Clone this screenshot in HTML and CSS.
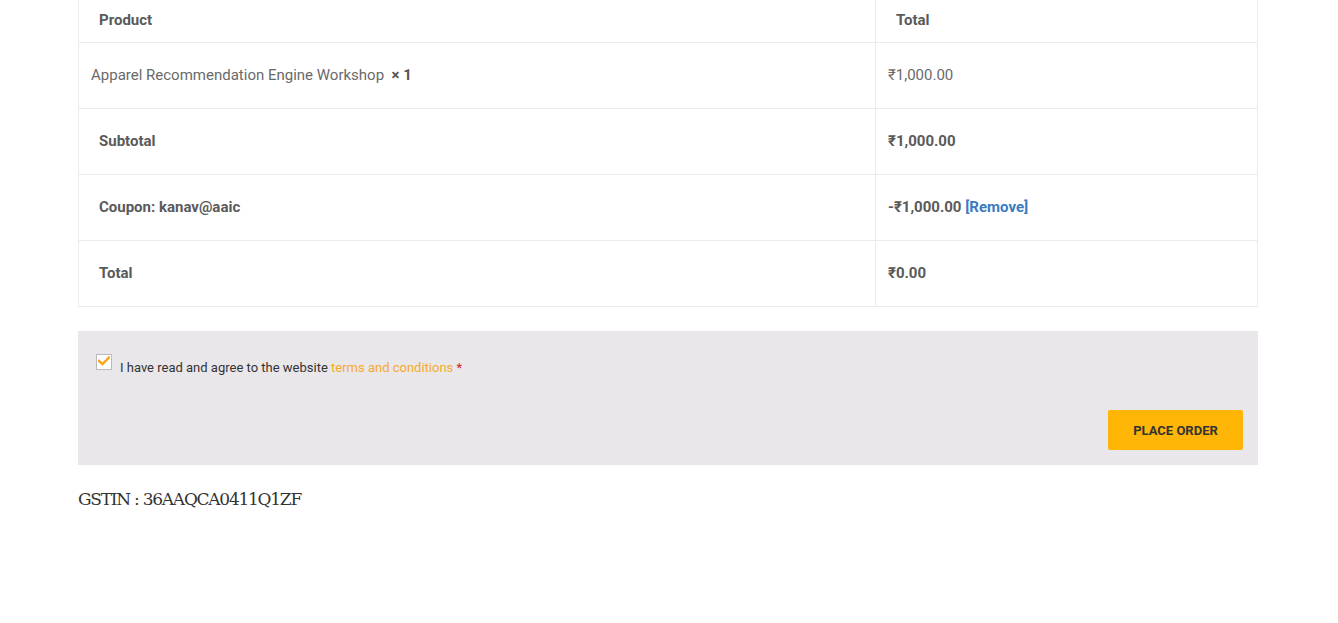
FILE: index.html
```html
<!DOCTYPE html>
<html>
<head>
<meta charset="utf-8">
<link rel="stylesheet" href="styles.css">
</head>
<body>
<div class="page">
  <table class="order">
    <thead>
      <tr class="head-row"><th class="col-product">Product</th><th class="col-total">Total</th></tr>
    </thead>
    <tbody>
      <tr><td class="item">Apparel Recommendation Engine Workshop&nbsp; <strong class="qty">× 1</strong></td><td class="item">₹1,000.00</td></tr>
    </tbody>
    <tfoot>
      <tr><th>Subtotal</th><td><strong>₹1,000.00</strong></td></tr>
      <tr><th>Coupon: kanav@aaic</th><td><strong>-₹1,000.00</strong> <a class="remove" href="#">[Remove]</a></td></tr>
      <tr><th>Total</th><td><strong>₹0.00</strong></td></tr>
    </tfoot>
  </table>

  <div class="payment">
    <label class="terms">
      <span class="checkbox">
        <svg width="12" height="10" viewBox="0 0 12 10"><path d="M1 5 L4.5 8 L11 1.5" fill="none" stroke="#f7a51c" stroke-width="2.4" stroke-linecap="square"/></svg>
      </span>
      <span class="terms-text">I have read and agree to the website <a class="terms-link" href="#">terms and conditions</a> <span class="req">*</span></span>
    </label>
    <div class="actions">
      <button class="place">PLACE ORDER</button>
    </div>
  </div>

  <p class="gstin">GSTIN : 36AAQCA0411Q1ZF</p>
</div>
</body>
</html>
```
FILE: styles.css
```css
html, body {
  margin: 0;
  padding: 0;
  background: #fff;
}
body {
  font-family: Roboto, "Liberation Sans", Arial, sans-serif;
  font-size: 15px;
  color: #666;
}
.page {
  width: 1180px;
  margin: 0 0 0 78px;
}
.order {
  width: 100%;
  border-collapse: collapse;
  border: 1px solid #ebebeb;
  border-top: none;
  table-layout: fixed;
}
.order th, .order td {
  border: 1px solid #ebebeb;
  text-align: left;
  vertical-align: middle;
}
.order th {
  font-weight: 700;
  color: #5a5a5a;
  padding: 0 20px 1px;
  height: 64px;
}
.order td {
  padding: 0 12px 1px;
  height: 64px;
  color: #5a5a5a;
}
.order td strong { font-weight: 700; }
.head-row th {
  height: 40px;
  padding: 0 20px 2px;
  border-top: none;
}
.col-product { width: 756px; }
.order td.item { color: #6a6a6a; }
.qty { color: #555; }
.remove {
  color: #3a7bc0;
  text-decoration: none;
  font-weight: 700;
}
.payment {
  margin-top: 24px;
  background: #e9e7ea;
  height: 134px;
  box-sizing: border-box;
  padding: 23px 15px 15px 18px;
  display: flex;
  flex-direction: column;
}
.terms {
  display: flex;
  align-items: flex-start;
  gap: 8px;
  font-size: 13px;
  color: #333;
}
.checkbox {
  width: 14px;
  height: 14px;
  border: 1px solid #bbb;
  background: #fff;
  display: flex;
  align-items: center;
  justify-content: center;
  flex: none;
}
.checkbox svg { margin-top: -3px; }
.terms-text { margin-top: 6px; }
.terms-link {
  color: #f7ab2b;
  text-decoration: none;
}
.req { color: #e01a1a; }
.actions {
  margin-top: auto;
  display: flex;
  justify-content: flex-end;
}
.place {
  width: 135px;
  height: 40px;
  background: #ffb606;
  border: none;
  border-radius: 2px;
  font-family: Roboto, "Liberation Sans", Arial, sans-serif;
  font-weight: 700;
  font-size: 13px;
  color: #333;
  letter-spacing: 0;
}
.gstin {
  margin: 24px 0 0;
  font-family: "DejaVu Serif", "Liberation Serif", serif;
  font-size: 17px;
  color: #333;
  letter-spacing: -1.25px;
}
```
